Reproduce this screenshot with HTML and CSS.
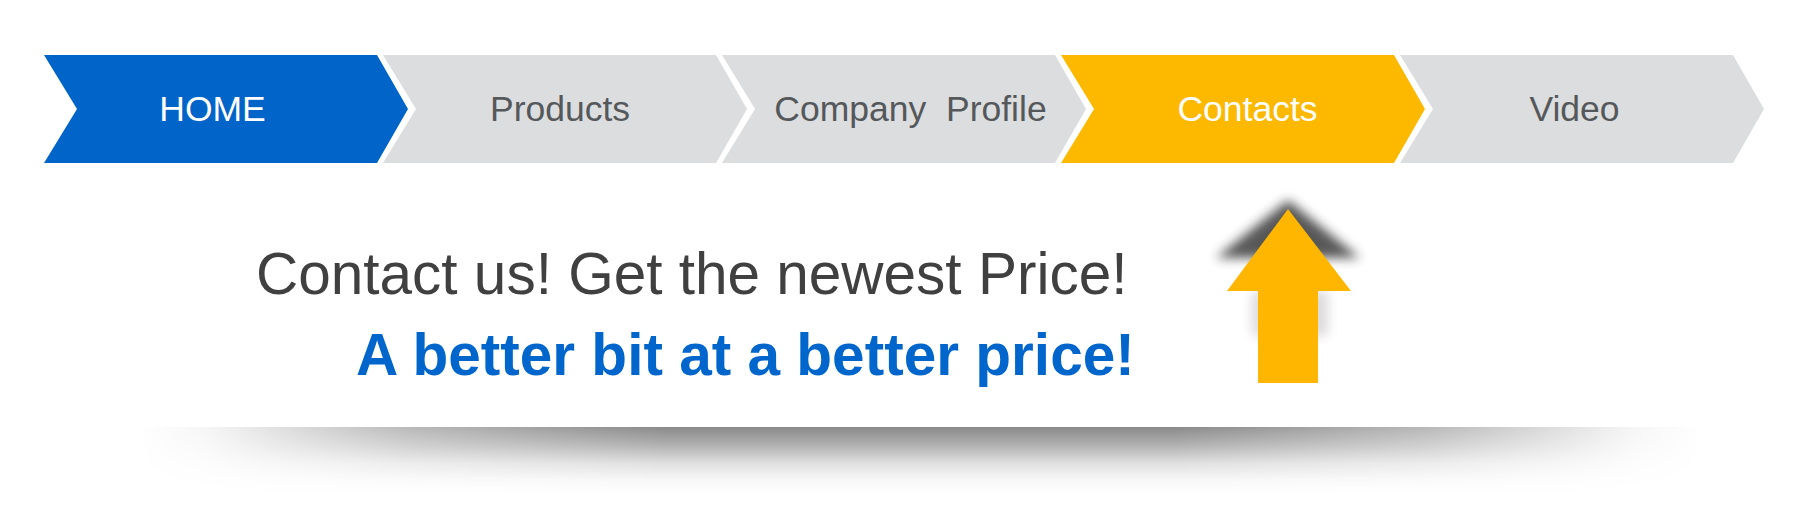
FILE: index.html
```html
<!DOCTYPE html>
<html lang="en">
<head>
<meta charset="utf-8">
<title>Contacts</title>
<link rel="stylesheet" href="styles.css">
</head>
<body>
<div class="page">
  <nav class="steps">
    <a class="step step-blue step-home">HOME</a>
    <a class="step step-gray step-products">Products</a>
    <a class="step step-gray step-company">Company&nbsp; Profile</a>
    <a class="step step-yellow step-contacts">Contacts</a>
    <a class="step step-gray step-video">Video</a>
  </nav>
  <section class="promo">
    <div class="promo-text">
      <p class="line1">Contact us! Get the newest Price!</p>
      <p class="line2">A better bit at a better price!</p>
    </div>
    <svg class="arrow" width="180" height="200" viewBox="0 0 180 200" aria-hidden="true">
      <defs>
        <filter id="blurHead" x="-50%" y="-50%" width="200%" height="200%">
          <feGaussianBlur stdDeviation="5.5"/>
        </filter>
        <filter id="blurShaft" x="-50%" y="-50%" width="200%" height="200%">
          <feGaussianBlur stdDeviation="6"/>
        </filter>
      </defs>
      <rect x="52" y="101" width="76" height="45" fill="#000" opacity="0.14" filter="url(#blurShaft)"/>
      <polygon points="88,10 16,68 160,68" fill="#2e2e2e" opacity="0.8" filter="url(#blurHead)"/>
      <polygon points="88,19 151,101 118,101 118,193 58,193 58,101 27,101" fill="#ffb600"/>
    </svg>
  </section>
  <div class="floor-shadow"></div>
</div>
</body>
</html>
```

FILE: styles.css
```css
html, body {
  margin: 0;
  padding: 0;
  background: #ffffff;
}

body {
  font-family: "Liberation Sans", Arial, sans-serif;
  width: 1800px;
  height: 528px;
  overflow: hidden;
}

.page {
  display: flex;
  flex-direction: column;
}

/* ---------- chevron steps ---------- */
.steps {
  display: flex;
  padding: 55px 0 0 44px;
}

.step {
  display: flex;
  align-items: center;
  justify-content: center;
  box-sizing: border-box;
  width: 364px;
  height: 108px;
  font-size: 35.5px;
  text-decoration: none;
  white-space: nowrap;
  clip-path: polygon(0 0, 333px 0, 364px 50%, 333px 100%, 0 100%, 33px 50%);
}

.step + .step {
  margin-left: -25px;
}

.step-blue {
  background: #0064c8;
  color: #ffffff;
}

.step-gray {
  background: #dcdddf;
  color: #55585b;
}

.step-yellow {
  background: #fdb800;
  color: #ffffff;
}

.step-home { padding-right: 27px; }
.step-products { padding-right: 10px; }
.step-company { padding-left: 13px; }
.step-contacts { padding-left: 9px; }
.step-video { padding-right: 15px; }

/* ---------- promo ---------- */
.promo {
  display: flex;
  align-items: flex-start;
}

.promo-text {
  width: 900px;
  margin-left: 256px;
  padding-top: 76px;
  white-space: nowrap;
}

.promo-text p {
  margin: 0;
}

.line1 {
  font-size: 58.5px;
  line-height: 70px;
  color: #404040;
}

.line2 {
  margin-top: 11px !important;
  margin-left: 100px !important;
  font-size: 60px;
  line-height: 70px;
  font-weight: bold;
  color: #0066cc;
  transform: scaleX(0.976);
  transform-origin: left center;
}

.arrow {
  display: block;
  margin-top: 27px;
  margin-left: 44px;
  overflow: visible;
}

/* ---------- floor shadow ---------- */
.floor-shadow {
  margin: 37px 0 0 70px;
  width: 1700px;
  height: 66px;
  background: linear-gradient(to bottom,
      rgba(0, 0, 0, 0.46) 0%,
      rgba(0, 0, 0, 0.32) 25%,
      rgba(0, 0, 0, 0.12) 55%,
      rgba(0, 0, 0, 0.03) 80%,
      rgba(0, 0, 0, 0) 100%);
  -webkit-mask-image: linear-gradient(to right,
      transparent 0%,
      transparent 4%,
      rgba(0, 0, 0, 0.08) 8%,
      rgba(0, 0, 0, 0.3) 13%,
      rgba(0, 0, 0, 0.6) 20%,
      #000 35%,
      #000 65%,
      rgba(0, 0, 0, 0.6) 80%,
      rgba(0, 0, 0, 0.3) 87%,
      rgba(0, 0, 0, 0.08) 92%,
      transparent 96%,
      transparent 100%);
  mask-image: linear-gradient(to right,
      transparent 0%,
      transparent 4%,
      rgba(0, 0, 0, 0.08) 8%,
      rgba(0, 0, 0, 0.3) 13%,
      rgba(0, 0, 0, 0.6) 20%,
      #000 35%,
      #000 65%,
      rgba(0, 0, 0, 0.6) 80%,
      rgba(0, 0, 0, 0.3) 87%,
      rgba(0, 0, 0, 0.08) 92%,
      transparent 96%,
      transparent 100%);
}
```
